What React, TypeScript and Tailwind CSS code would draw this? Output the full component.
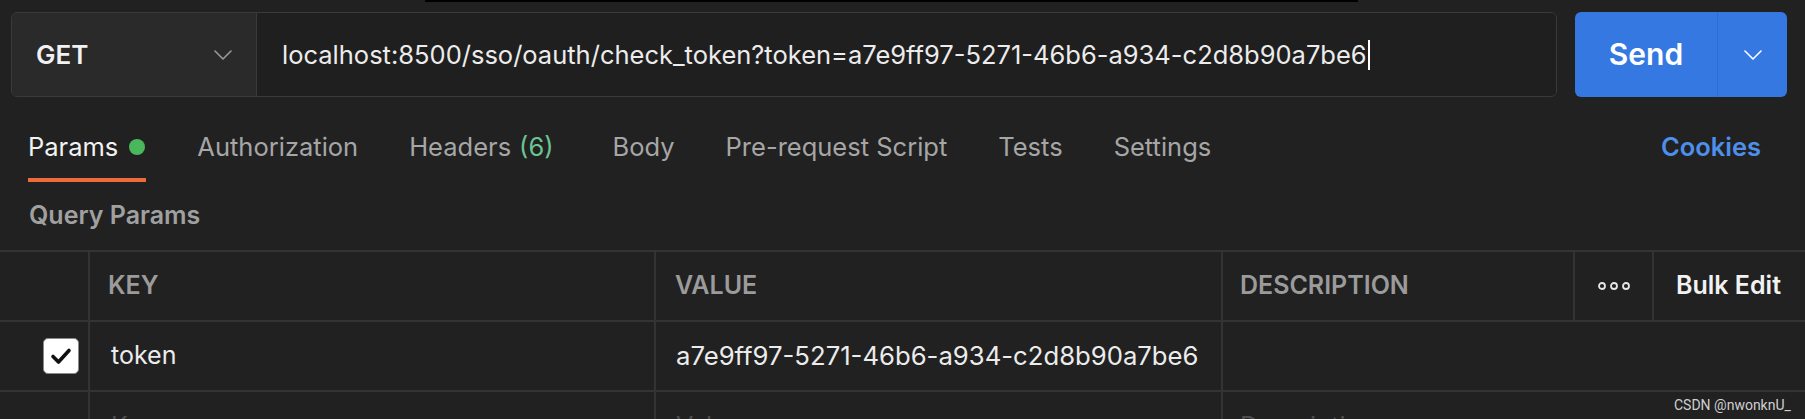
import React from "react";

const font = { fontFamily: "Inter, 'Noto Sans', sans-serif" };

const Chevron: React.FC<{ className?: string }> = ({ className }) => (
  <svg viewBox="0 0 18 10" className={className} fill="none" stroke="currentColor" strokeWidth="1.6" strokeLinecap="round" strokeLinejoin="round">
    <path d="M1 1l8 8 8-8" />
  </svg>
);

const tabs = [
  { label: "Authorization" },
  { label: "Headers", count: "(6)" },
  { label: "Body" },
  { label: "Pre-request Script" },
  { label: "Tests" },
  { label: "Settings" },
];

export default function App() {
  return (
    <div className="relative w-[1805px] h-[419px] overflow-hidden bg-[#212121] text-[#a6a6a6]" style={font}>
      {/* top strip */}
      <div className="h-[12px]">
        <div className="ml-[425px] w-[933px] h-[2px] bg-black" />
      </div>

      {/* request bar */}
      <div className="flex h-[85px] pl-[11px]">
        <div className="flex w-[1546px] rounded-[6px] border border-[#3a3a3a] overflow-hidden">
          <div className="flex w-[245px] items-center justify-between bg-[#2a2a2a] border-r border-[#3a3a3a] pl-[24px] pr-[24px]">
            <span className="text-[26px] font-semibold text-[#f2f2f2]">GET</span>
            <Chevron className="w-[18px] h-[10px] text-[#9a9a9a]" />
          </div>
          <div className="flex flex-1 items-center bg-[#1f1f1f] pl-[25px]">
            <span className="text-[25.5px] text-[#ececec] border-r-2 border-white pr-px leading-[30px]">
              localhost:8500/sso/oauth/check_token?token=a7e9ff97-5271-46b6-a934-c2d8b90a7be6
            </span>
          </div>
        </div>
        <div className="ml-[18px] flex w-[212px] rounded-[6px] bg-[#3578e2] overflow-hidden">
          <div className="flex w-[143px] items-center justify-center border-r border-[#2f6cd0]">
            <span className="text-[30px] font-semibold text-white">Send</span>
          </div>
          <div className="flex flex-1 items-center justify-center">
            <Chevron className="w-[18px] h-[10px] text-white" />
          </div>
        </div>
      </div>

      {/* tabs */}
      <div className="flex items-start pt-[32px] pl-[28px] pr-[44px]">
        <div className="flex flex-col h-[53px] justify-between">
          <div className="flex items-center h-[36px] gap-[11px]">
            <span className="text-[25.5px] text-[#f2f2f2]">Params</span>
            <span className="w-[16px] h-[16px] rounded-full bg-[#49b85c]" />
          </div>
          <div className="h-[4px] bg-[#ed6a3a] mr-[-1px]" />
        </div>
        <div className="flex gap-[51px] ml-[52px]">
          {tabs.map((t) => (
            <div key={t.label} className="flex items-center h-[36px] gap-[8px] text-[25.5px] text-[#a6a6a6]">
              <span>{t.label}</span>
              {t.count && <span className="text-[#6cc490] mr-[8px]">{t.count}</span>}
            </div>
          ))}
        </div>
        <div className="ml-auto flex items-center h-[36px] text-[25.5px] font-semibold text-[#4d8fea]">Cookies</div>
      </div>

      {/* query params label */}
      <div className="flex items-center h-[68px] pl-[29px]">
        <span className="text-[25px] font-semibold text-[#a0a0a0]">Query Params</span>
      </div>

      {/* table */}
      <div className="grid grid-cols-[88px_566px_567px_352px_79px_1fr] border-t-2 border-[#333333]">
        {/* header */}
        <div className="h-[70px] border-b-2 border-[#333333]" />
        <div className="h-[70px] flex items-center pl-[18px] border-l-2 border-b-2 border-[#333333] text-[25px] font-semibold text-[#9b9b9b]">KEY</div>
        <div className="h-[70px] flex items-center pl-[19px] border-l-2 border-b-2 border-[#333333] text-[25px] font-semibold text-[#9b9b9b]">VALUE</div>
        <div className="h-[70px] flex items-center pl-[17px] border-l-2 border-b-2 border-[#333333] text-[25px] font-semibold text-[#9b9b9b]">DESCRIPTION</div>
        <div className="h-[70px] flex items-center justify-center border-l-2 border-b-2 border-[#333333]">
          <svg viewBox="0 0 32 8" className="w-[32px] h-[8px]" fill="none" stroke="#e6e6e6" strokeWidth="1.8">
            <circle cx="4" cy="4" r="3" />
            <circle cx="16" cy="4" r="3" />
            <circle cx="28" cy="4" r="3" />
          </svg>
        </div>
        <div className="h-[70px] flex items-center pl-[22px] border-l-2 border-b-2 border-[#333333] text-[25px] font-semibold text-[#f2f2f2]">Bulk Edit</div>

        {/* row 1 */}
        <div className="h-[70px] flex items-center justify-end pr-[9px] border-b-2 border-[#333333]">
          <div className="w-[36px] h-[36px] rounded-[5px] bg-white border border-[#8a8a8a] flex items-center justify-center">
            <svg viewBox="0 0 24 24" className="w-[24px] h-[24px]" fill="none" stroke="#111" strokeWidth="3.6" strokeLinecap="round" strokeLinejoin="round">
              <path d="M4 12.5l5.5 5.5L20 6.5" />
            </svg>
          </div>
        </div>
        <div className="h-[70px] flex items-center pl-[21px] border-l-2 border-b-2 border-[#333333] text-[25px] text-[#ececec]">token</div>
        <div className="h-[70px] flex items-center pl-[20px] border-l-2 border-b-2 border-[#333333] text-[25.7px] text-[#ececec]">a7e9ff97-5271-46b6-a934-c2d8b90a7be6</div>
        <div className="h-[70px] border-l-2 border-b-2 border-[#333333] col-span-3" />

        {/* row 2 (placeholders, cut by the window edge as in the screenshot) */}
        <div className="h-[70px]" />
        <div className="h-[70px] flex items-center pl-[21px] border-l-2 border-[#333333] text-[25px] text-[#4e4e4e]">Key</div>
        <div className="h-[70px] flex items-center pl-[20px] border-l-2 border-[#333333] text-[25px] text-[#4e4e4e]">Value</div>
        <div className="h-[70px] flex items-center pl-[17px] border-l-2 border-[#333333] text-[25px] text-[#4e4e4e] col-span-3">Description</div>
      </div>

      {/* watermark */}
      <div className="absolute left-[1674px] top-[395px] text-[14px] text-[#d0d0d0]" style={{ fontFamily: "Roboto, sans-serif" }}>
        CSDN @nwonknU_
      </div>
    </div>
  );
}
